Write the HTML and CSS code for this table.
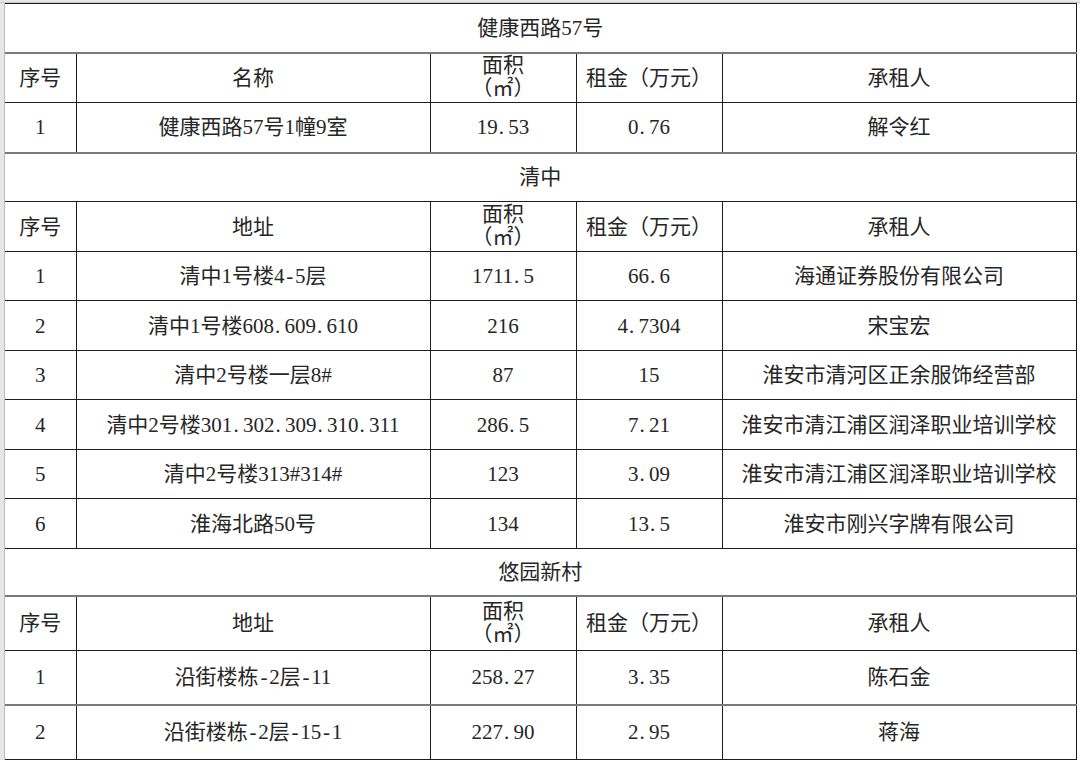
FILE: index.html
```html
<!DOCTYPE html>
<html lang="zh">
<head>
<meta charset="utf-8">
<title>租赁明细</title>
<link rel="stylesheet" href="styles.css">
</head>
<body>
<div class="sheet">
  <div class="gutter-top"></div>
  <div class="body-row">
    <div class="gutter-left"></div>
    <table class="grid">
      <colgroup>
        <col class="c-no"><col class="c-name"><col class="c-area"><col class="c-rent"><col class="c-tenant">
      </colgroup>
      <tbody>
        <tr class="title h49 gb"><td colspan="5">健康西路57号</td></tr>
        <tr class="head h50"><td>序号</td><td>名称</td><td class="wrap">面积<br>（㎡）</td><td>租金（万元）</td><td>承租人</td></tr>
        <tr class="h50 gb"><td>1</td><td>健康西路57号1幢9室</td><td>19<span class="dt">.</span>53</td><td>0<span class="dt">.</span>76</td><td>解令红</td></tr>

        <tr class="title h49"><td colspan="5">清中</td></tr>
        <tr class="head h50"><td>序号</td><td>地址</td><td class="wrap">面积<br>（㎡）</td><td>租金（万元）</td><td>承租人</td></tr>
        <tr class="h49"><td>1</td><td>清中1号楼4<span class="hy">-</span>5层</td><td>1711<span class="dt">.</span>5</td><td>66<span class="dt">.</span>6</td><td>海通证券股份有限公司</td></tr>
        <tr class="h50"><td>2</td><td>清中1号楼608<span class="dt">.</span>609<span class="dt">.</span>610</td><td>216</td><td>4<span class="dt">.</span>7304</td><td>宋宝宏</td></tr>
        <tr class="h49"><td>3</td><td>清中2号楼一层8#</td><td>87</td><td>15</td><td>淮安市清河区正余服饰经营部</td></tr>
        <tr class="h50"><td>4</td><td>清中2号楼301<span class="dt">.</span>302<span class="dt">.</span>309<span class="dt">.</span>310<span class="dt">.</span>311</td><td>286<span class="dt">.</span>5</td><td>7<span class="dt">.</span>21</td><td>淮安市清江浦区润泽职业培训学校</td></tr>
        <tr class="h49"><td>5</td><td>清中2号楼313#314#</td><td>123</td><td>3<span class="dt">.</span>09</td><td>淮安市清江浦区润泽职业培训学校</td></tr>
        <tr class="h50"><td>6</td><td>淮海北路50号</td><td>134</td><td>13<span class="dt">.</span>5</td><td>淮安市刚兴字牌有限公司</td></tr>

        <tr class="title h47 gb"><td colspan="5">悠园新村</td></tr>
        <tr class="head h55"><td>序号</td><td>地址</td><td class="wrap">面积<br>（㎡）</td><td>租金（万元）</td><td>承租人</td></tr>
        <tr class="h54 gb"><td>1</td><td>沿街楼栋<span class="hy">-</span>2层<span class="hy">-</span>11</td><td>258<span class="dt">.</span>27</td><td>3<span class="dt">.</span>35</td><td>陈石金</td></tr>
        <tr class="h55"><td>2</td><td>沿街楼栋<span class="hy">-</span>2层<span class="hy">-</span>15<span class="hy">-</span>1</td><td>227<span class="dt">.</span>90</td><td>2<span class="dt">.</span>95</td><td>蒋海</td></tr>
      </tbody>
    </table>
    <div class="gutter-right"></div>
  </div>
</div>
</body>
</html>
```

FILE: styles.css
```css
html, body {
  margin: 0;
  padding: 0;
  background: #ffffff;
}

body {
  width: 1080px;
  height: 763px;
  overflow: hidden;
  font-family: "Liberation Serif", "Noto Sans CJK SC", serif;
  font-size: 21px;
  color: #262626;
}

.sheet {
  display: flex;
  flex-direction: column;
}

.gutter-top {
  height: 2px;
  background: #e6e6e6;
  border-bottom: 1px solid #c4c4c4;
}

.body-row {
  display: flex;
}

.gutter-left {
  width: 4px;
  flex: none;
  background: #e6e6e6;
  border-right: 1px solid #bdbdbd;
}

.gutter-right {
  flex: 1;
  background: #ffffff;
}

.grid {
  border-collapse: collapse;
  table-layout: fixed;
  width: 1071px;
  flex: none;
}

.c-no { width: 71px; }
.c-name { width: 354px; }
.c-area { width: 146px; }
.c-rent { width: 146px; }
.c-tenant { width: 354px; }

.grid td {
  padding: 0;
  text-align: center;
  vertical-align: middle;
  white-space: nowrap;
  border: 1px solid #1e1e1e;
  line-height: 24px;
}

.grid tr > td:first-child {
  border-left: none;
}

.grid td.wrap {
  line-height: 23px;
  padding-bottom: 1px;
}

.title td {
  border-left: none;
}

.gb td {
  border-bottom: 2px solid #7a7a7a;
}

.dt {
  display: inline-block;
  width: 0.5em;
  text-align: left;
  text-indent: 1px;
}

.hy {
  display: inline-block;
  width: 0.5em;
  text-align: center;
}

.h47 { height: 47px; }
.h49 { height: 49px; }
.h50 { height: 50px; }
.h54 { height: 54px; }
.h55 { height: 55px; }
```
